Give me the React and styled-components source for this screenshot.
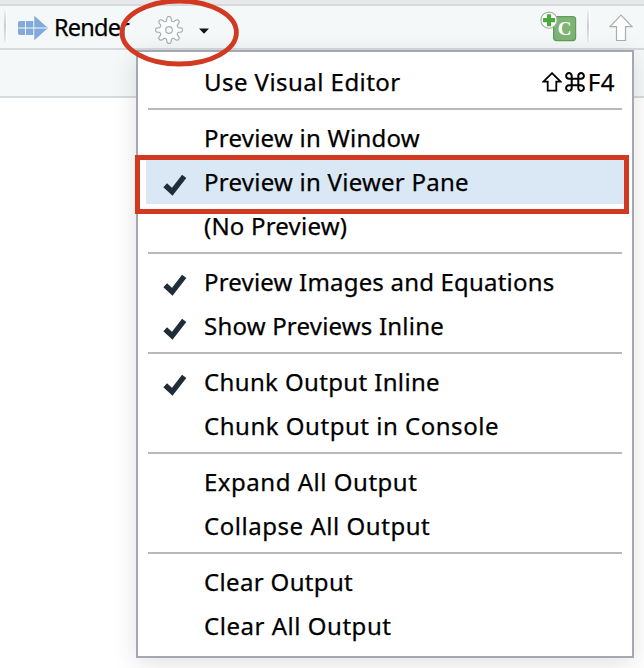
import React from 'react';
import styled, { createGlobalStyle } from 'styled-components';

const Global = createGlobalStyle`
  * { box-sizing: border-box; }
  body { margin: 0; background: #fff; color: #000; overflow: hidden;
    font-family: "Noto Sans", "Open Sans", sans-serif; font-size: 24px;
    -webkit-text-stroke: 0.25px #000; }
  svg { display: block; flex: none; -webkit-text-stroke: 0; }
`;
const Page = styled.main`
  position: relative;
  width: 644px;
  height: 668px;
  overflow: hidden;
`;
const TopStrip = styled.div`
  height: 6px;
  background: #e7e8e9;
  border-bottom: 2px solid #d6dadc;
`;
const Toolbar = styled.header`
  display: flex;
  align-items: flex-start;
  height: 44px;
  background: #f4f8f9;
  border-bottom: 2px solid #d6dadc;
`;
const SubBar = styled.div`
  height: 48px;
  background: #f4f8f9;
  border-bottom: 2px solid #d6dadc;
`;
const Divider = styled.span`
  width: 2px;
  height: 32px;
  margin: 4px 0 0 ${p => p.$left}px;
  background: linear-gradient(#eef1f2, #c9cdcf 50%, #e9edee);
  box-shadow: 1px 0 #fff;
`;
const Slot = styled.span`
  display: block;
  margin: ${p => p.$top}px 0 0 ${p => p.$left}px;
`;
const RenderLabel = styled.span`
  width: 76px;
  margin: 5px 0 0 6px;
  font-size: 23.5px;
  line-height: 32px;
  letter-spacing: ${p => p.$spacing}px;
  white-space: nowrap;
`;
const Menu = styled.nav`
  position: absolute;
  left: 136px;
  top: 50px;
  width: 498px;
  height: 608px;
  padding: 8px;
  background: #fff;
  border: 2px solid #a3a8b3;
  box-shadow: 0 5px 24px rgba(0, 0, 0, 0.12);
`;
const Row = styled.div`
  display: flex;
  align-items: center;
  height: 44px;
  padding: 0 9px 0 17px;
  background: ${p => (p.$active ? '#dae7f4' : 'transparent')};
`;
const CheckSlot = styled.span`
  width: 41px;
  padding-top: 5px;
`;
const Label = styled.span`
  flex: 1;
  line-height: 44px;
  white-space: nowrap;
  letter-spacing: ${p => p.$spacing}px;
`;
const Shortcut = styled.span`
  display: flex;
  align-items: center;
  gap: 3px;
  line-height: 44px;
  letter-spacing: 0.5px;
`;
const Separator = styled.hr`
  height: 2px;
  margin: 4px 2px 6px;
  border: 0;
  background: #b9b9b9;
`;
const Highlight = styled.div`
  position: absolute;
  left: 135px;
  top: 155px;
  width: 494px;
  height: 59px;
  border: 5px solid #d13a20;
`;
const Ring = styled.svg`
  position: absolute;
  left: 116px;
  top: -4px;
`;

const Check = () => (
  <svg width="24" height="22" viewBox="0 0 24 22">
    <path d="M2.2 11.2 9.2 17.8 21.2 2.4" fill="none" stroke="#202d38" strokeWidth="5.4" />
  </svg>
);
const RenderArrow = () => (
  <svg width="30" height="26" viewBox="0 0 30 26">
    <path d="M2 6H16V0.5L30 13 16 25.5V20H2Q0 20 0 18V8Q0 6 2 6Z" fill="#81a9dc" />
    <path d="M0 13H29M7.5 6V20M15.8 0V26" stroke="#f4f8f9" strokeWidth="1" />
  </svg>
);
const gearPath = (() => {
  const pts = [];
  for (let i = 0; i < 128; i++) {
    const a = (i / 128) * Math.PI * 2;
    const wave = Math.cos(a * 8);
    const r = 11.3 + 2.2 * Math.tanh(wave * 1.9);
    pts.push(`${(14 + r * Math.sin(a)).toFixed(2)} ${(14 - r * Math.cos(a)).toFixed(2)}`);
  }
  return `M${pts.join('L')}Z`;
})();
const Gear = () => (
  <svg width="28" height="28" viewBox="0 0 28 28" fill="#fcfdfd" stroke="#acafb1" strokeWidth="1.2">
    <path d={gearPath} />
    <circle cx="14" cy="14" r="3.3" />
  </svg>
);
const Caret = () => (
  <svg width="12" height="7" viewBox="0 0 12 7"><path d="M1 .5H11L6 5.8Z" fill="#101515" /></svg>
);
const ChunkText = styled.text`
  font: 700 19px "Liberation Serif", serif;
  fill: #fff;
`;
const ChunkIcon = () => (
  <svg width="37" height="32" viewBox="0 0 37 32">
    <rect x="13.6" y="5.6" width="22" height="24" rx="3" fill="#7eb474" stroke="#63995b" strokeWidth="1.2" />
    <ChunkText x="17.8" y="24">C</ChunkText>
    <circle cx="9" cy="9.2" r="8.1" fill="#fff" stroke="#a4aaa6" strokeWidth="1.1" />
    <path d="M9 3.2V15.2M3 9.2H15" stroke="#4ca93b" strokeWidth="4.2" />
  </svg>
);
const UpArrow = () => (
  <svg width="24" height="28" viewBox="0 0 24 28">
    <path d="M12 1.2 23 12.6H16.5V26.5H7.5V12.6H1Z" fill="#fff" stroke="#adadad" strokeWidth="1.2" />
  </svg>
);
const ShiftIcon = () => (
  <svg width="20" height="20" viewBox="0 0 20 20">
    <path d="M10 1.2 18.6 9.7H14.3V18.7H5.7V9.7H1.4Z" fill="none" stroke="#000" strokeWidth="1.8" />
  </svg>
);
const CommandIcon = () => (
  <svg width="20" height="20" viewBox="0 0 20 20">
    <path d="M6.7 6.7H13.3V13.3H6.7ZM6.7 6.7H4A2.8 2.8 0 1 1 6.7 4ZM13.3 6.7V4A2.8 2.8 0 1 1 16 6.7ZM13.3 13.3H16A2.8 2.8 0 1 1 13.3 16ZM6.7 13.3V16A2.8 2.8 0 1 1 4 13.3Z" fill="none" stroke="#000" strokeWidth="2" />
  </svg>
);

const groups = [
  [{ text: 'Use Visual Editor', spacing: 0.45, shortcut: true }],
  [
    { text: 'Preview in Window', spacing: 0.24 },
    { text: 'Preview in Viewer Pane', spacing: 0.25, checked: true, active: true },
    { text: '(No Preview)', spacing: 0.2 },
  ],
  [
    { text: 'Preview Images and Equations', spacing: 0.19, checked: true },
    { text: 'Show Previews Inline', spacing: 0.2, checked: true },
  ],
  [
    { text: 'Chunk Output Inline', spacing: 0.36, checked: true },
    { text: 'Chunk Output in Console', spacing: 0.52 },
  ],
  [{ text: 'Expand All Output', spacing: 0.52 }, { text: 'Collapse All Output', spacing: 0.54 }],
  [{ text: 'Clear Output', spacing: 0.34 }, { text: 'Clear All Output', spacing: 0.53 }],
];

export default function App() {
  return (
    <>
      <Global />
      <Page>
        <TopStrip />
        <Toolbar>
          <Divider $left={4} />
          <Slot $left={12} $top={9}><RenderArrow /></Slot>
          <RenderLabel $spacing={-0.8}>Render</RenderLabel>
          <Slot $left={25} $top={10}><Gear /></Slot>
          <Slot $left={15} $top={22}><Caret /></Slot>
          <Slot $left={330} $top={5}><ChunkIcon /></Slot>
          <Divider $left={10} />
          <Slot $left={20} $top={8}><UpArrow /></Slot>
        </Toolbar>
        <SubBar />
        <Menu>
          {groups.map((items, i) => (
            <React.Fragment key={i}>
              {i > 0 && <Separator />}
              {items.map(item => (
                <Row key={item.text} $active={item.active}>
                  <CheckSlot>{item.checked && <Check />}</CheckSlot>
                  <Label $spacing={item.spacing}>{item.text}</Label>
                  {item.shortcut && <Shortcut><ShiftIcon /><CommandIcon /><span>F4</span></Shortcut>}
                </Row>
              ))}
            </React.Fragment>
          ))}
        </Menu>
        <Highlight />
        <Ring width="126" height="74" viewBox="0 0 126 74">
          <ellipse cx="63.2" cy="36.5" rx="57.2" ry="31.5" fill="none" stroke="#d13a20" strokeWidth="4.8" />
        </Ring>
      </Page>
    </>
  );
}
